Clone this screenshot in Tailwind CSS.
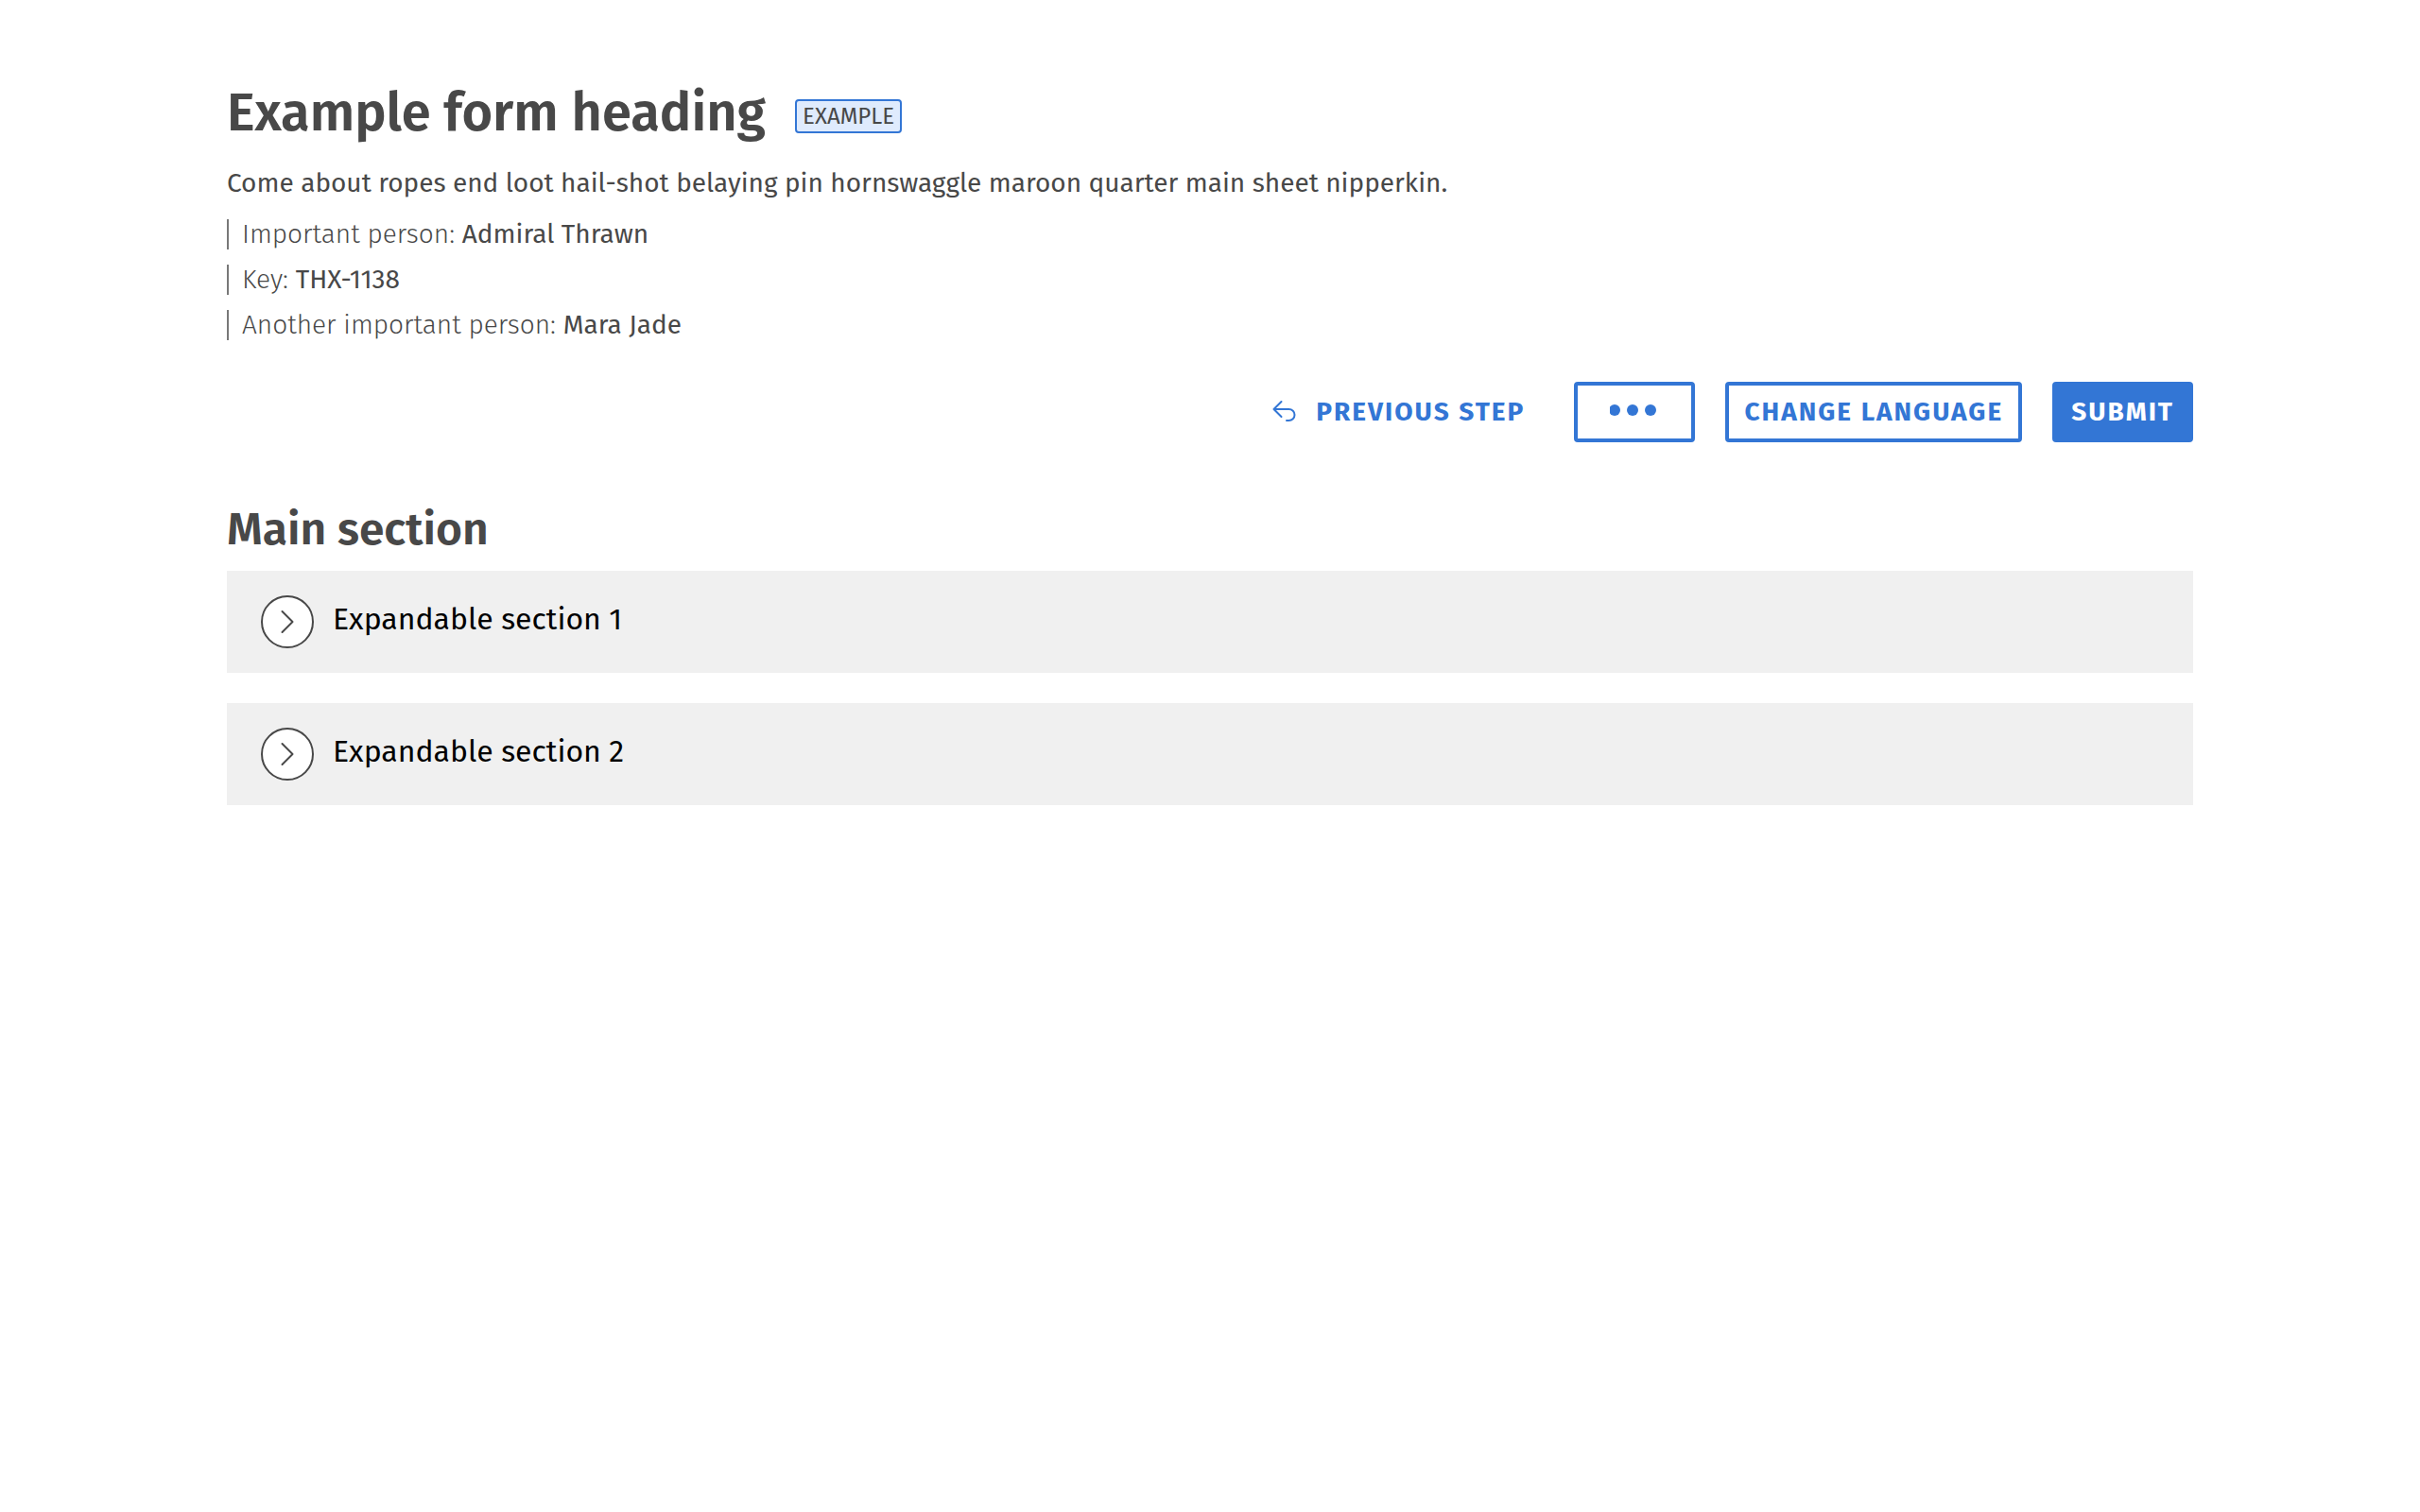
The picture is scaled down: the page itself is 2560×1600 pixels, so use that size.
<!DOCTYPE html>
<html lang="en">
<head>
<meta charset="utf-8">
<title>Example form heading</title>
<script src="https://cdn.jsdelivr.net/npm/@tailwindcss/browser@4"></script>
</head>
<body class="bg-white font-['Fira_Sans','Open_Sans',sans-serif] text-[28px] text-[#484848]">
<main class="px-60 pt-20 pb-20">
  <header>
    <div class="flex items-center gap-[31px]">
      <h1 class="text-[56px] leading-[80px] font-semibold">Example form heading</h1>
      <span class="mt-1.5 rounded-sm border-2 border-[#3376d5] bg-[#dfebfd] px-1.5 text-2xl leading-8 uppercase">Example</span>
    </div>
    <p class="mt-4 leading-9 font-normal">Come about ropes end loot hail-shot belaying pin hornswaggle maroon quarter main sheet nipperkin.</p>
    <ul class="mt-5 flex flex-col gap-4 leading-8 font-light">
      <li class="border-l-2 border-[#787878] pl-3.5">Important person: <span class="font-normal">Admiral Thrawn</span></li>
      <li class="border-l-2 border-[#787878] pl-3.5">Key: <span class="font-normal">THX-1138</span></li>
      <li class="border-l-2 border-[#787878] pl-3.5">Another important person: <span class="font-normal">Mara Jade</span></li>
    </ul>
    <div class="mt-11 flex justify-end gap-8 font-bold tracking-[2px] text-[#3376d5] uppercase">
      <button type="button" class="flex h-16 items-center gap-5 px-5 uppercase">
        <svg class="size-[26px]" viewBox="0 0 26 26" fill="none" stroke="currentColor" stroke-width="2" stroke-linecap="round" stroke-linejoin="round" aria-hidden="true"><path d="M9.500 2 1.500 10 9.500 18M1.500 10H17.500a6 6 0 0 1 0 12H15"/></svg>
        Previous step
      </button>
      <button type="button" aria-label="More actions" class="flex h-16 w-32 items-center justify-center rounded-sm border-4 border-[#3376d5]">
        <svg class="h-4 w-[52px]" viewBox="0 0 52 16" fill="currentColor" aria-hidden="true"><circle cx="5" cy="6" r="6"/><circle cx="24" cy="6" r="6"/><circle cx="43" cy="6" r="6"/></svg>
      </button>
      <button type="button" class="h-16 rounded-sm border-4 border-[#3376d5] px-4 uppercase">Change language</button>
      <button type="submit" class="h-16 rounded-sm border-4 border-[#3376d5] bg-[#3376d5] px-4 text-white uppercase">Submit</button>
    </div>
  </header>
  <section class="mt-16">
    <h2 class="text-5xl leading-14 font-semibold">Main section</h2>
    <div class="mt-4 flex flex-col gap-8">
      <h3>
        <button type="button" aria-expanded="false" class="flex h-[108px] w-full items-center gap-5 bg-[#f0f0f0] px-9 text-left text-[32px] leading-10 font-normal text-black">
          <svg class="size-14 text-[#484848]" viewBox="0 0 56 56" fill="none" stroke="currentColor" stroke-width="2" stroke-linecap="round" stroke-linejoin="round" aria-hidden="true"><circle cx="28" cy="28" r="27" fill="white"/><path d="M22.500 17 33.500 28 22.500 39"/></svg>
          <span class="pb-1.5">Expandable section 1</span>
        </button>
      </h3>
      <h3>
        <button type="button" aria-expanded="false" class="flex h-[108px] w-full items-center gap-5 bg-[#f0f0f0] px-9 text-left text-[32px] leading-10 font-normal text-black">
          <svg class="size-14 text-[#484848]" viewBox="0 0 56 56" fill="none" stroke="currentColor" stroke-width="2" stroke-linecap="round" stroke-linejoin="round" aria-hidden="true"><circle cx="28" cy="28" r="27" fill="white"/><path d="M22.500 17 33.500 28 22.500 39"/></svg>
          <span class="pb-1.5">Expandable section 2</span>
        </button>
      </h3>
    </div>
  </section>
</main>
</body>
</html>
